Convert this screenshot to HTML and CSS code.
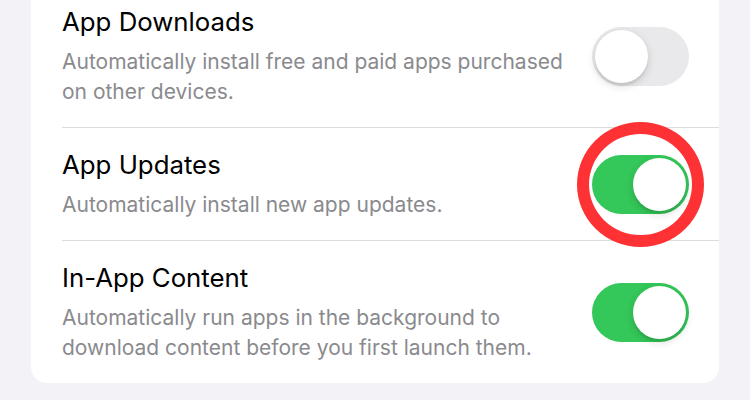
FILE: index.html
```html
<!DOCTYPE html>
<html lang="en">
<head>
<meta charset="utf-8">
<title>App Store Settings</title>
<link rel="stylesheet" href="styles.css">
</head>
<body>
<div class="page">
  <div class="card">
    <div class="row">
      <div class="text">
        <div class="title">App Downloads</div>
        <div class="sub">Automatically install free and paid apps purchased on other devices.</div>
      </div>
      <div class="switch"><div class="knob"></div></div>
    </div>
    <div class="row">
      <div class="text">
        <div class="title">App Updates</div>
        <div class="sub">Automatically install new app updates.</div>
      </div>
      <div class="switch on"><div class="knob"></div><div class="ring"></div></div>
    </div>
    <div class="row last">
      <div class="text">
        <div class="title">In-App Content</div>
        <div class="sub">Automatically run apps in the background to download content before you first launch them.</div>
      </div>
      <div class="switch on"><div class="knob"></div></div>
    </div>
  </div>
</div>
</body>
</html>
```
FILE: styles.css
```css
html, body {
  margin: 0;
  padding: 0;
  background: #f2f2f7;
  overflow: hidden;
}
body {
  width: 750px;
  height: 400px;
  font-family: Inter, "Noto Sans", "Liberation Sans", sans-serif;
  -webkit-font-smoothing: antialiased;
}
.page {
  padding: 0 31px 0 31px;
  margin-top: -15px;
}
.card {
  background: #ffffff;
  border-radius: 16px;
  padding-left: 31px;
}
.row {
  display: flex;
  align-items: center;
  gap: 20px;
  padding: 21px 30px 20px 0;
  border-bottom: 1px solid #dcdcde;
}
.row.last {
  border-bottom: none;
}
.text {
  flex: 1;
  min-width: 0;
}
.title {
  font-size: 25.8px;
  line-height: 32px;
  color: #000000;
}
.sub {
  margin-top: 9px;
  font-size: 21px;
  line-height: 30px;
  color: #8a8a8e;
}
.switch {
  position: relative;
  flex: none;
  width: 97px;
  height: 59px;
  border-radius: 30px;
  background: #e9e9eb;
}
.switch.on {
  background: #34c759;
}
.knob {
  position: absolute;
  top: 3px;
  left: 3px;
  width: 53px;
  height: 53px;
  border-radius: 50%;
  background: #ffffff;
  box-shadow: 0 3px 8px rgba(0, 0, 0, 0.15), 0 3px 1px rgba(0, 0, 0, 0.06);
}
.switch.on .knob {
  left: 41px;
}
.ring {
  position: absolute;
  left: -15px;
  top: -33px;
  width: 127px;
  height: 125px;
  box-sizing: border-box;
  border: 12px solid #fe3234;
  border-radius: 50%;
}
```
